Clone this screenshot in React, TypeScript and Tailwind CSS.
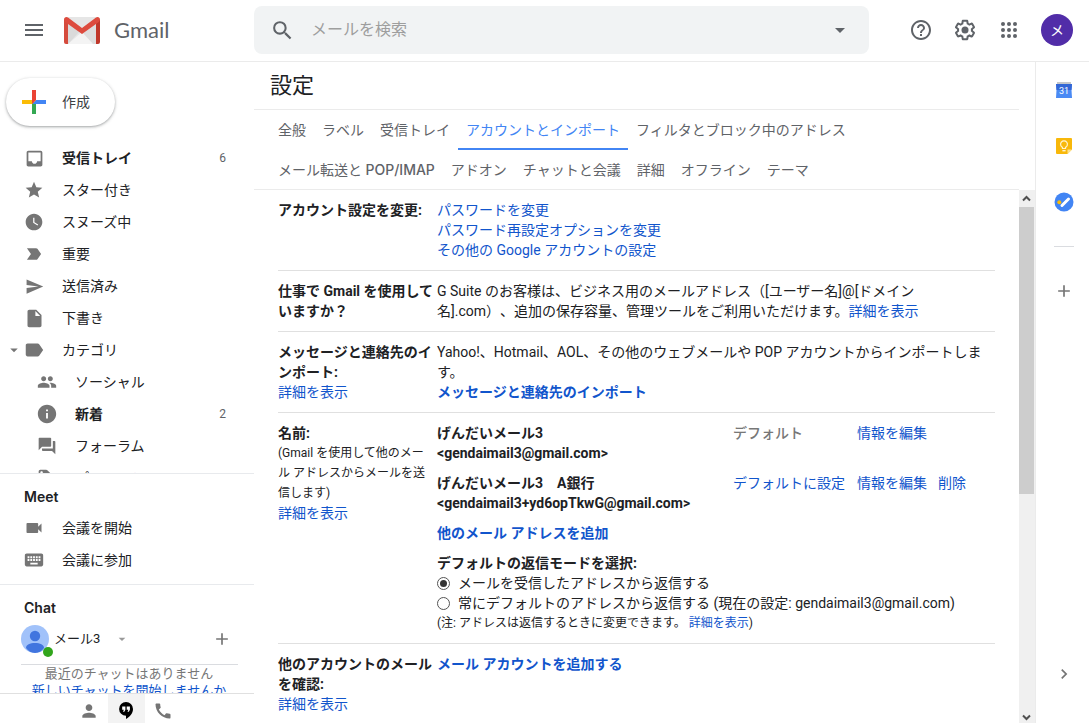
import React from 'react'
import clsx from 'clsx'
import type { IconType } from 'react-icons'
import {
    MdAdd,
    MdArrowDropDown,
    MdCall,
    MdChevronRight,
    MdForum,
    MdGroup,
    MdHelpOutline,
    MdInbox,
    MdInfo,
    MdInsertDriveFile,
    MdKeyboard,
    MdLabel,
    MdLabelImportant,
    MdLocalOffer,
    MdMenu,
    MdPerson,
    MdSearch,
    MdSend,
    MdStar,
    MdVideocam,
    MdWatchLater,
} from 'react-icons/md'

type NavItem = {
    label: string
    icon: IconType
    size?: number
    count?: number
    bold?: boolean
    expandable?: boolean
    nested?: boolean
}

const mailboxes: NavItem[] = [
    { label: '受信トレイ', icon: MdInbox, size: 21, count: 6, bold: true },
    { label: 'スター付き', icon: MdStar },
    { label: 'スヌーズ中', icon: MdWatchLater },
    { label: '重要', icon: MdLabelImportant },
    { label: '送信済み', icon: MdSend, size: 19 },
    { label: '下書き', icon: MdInsertDriveFile, size: 21 },
    { label: 'カテゴリ', icon: MdLabel, size: 22, expandable: true },
    { label: 'ソーシャル', icon: MdGroup, nested: true },
    { label: '新着', icon: MdInfo, size: 22, count: 2, bold: true, nested: true },
    { label: 'フォーラム', icon: MdForum, nested: true },
    { label: 'プロモーション', icon: MdLocalOffer, nested: true },
]

const meetLinks: NavItem[] = [
    { label: '会議を開始', icon: MdVideocam },
    { label: '会議に参加', icon: MdKeyboard, size: 22 },
]

const activeTab = 'アカウントとインポート'

const tabRows: { id: string; label?: React.ReactNode }[][] = [
    [
        { id: '全般' },
        { id: 'ラベル' },
        { id: '受信トレイ' },
        { id: activeTab },
        { id: 'フィルタとブロック中のアドレス' },
    ],
    [
        {
            id: 'forwarding',
            label: (
                <span>
                    メール転送と <span className="font-medium [font-family:Inter,sans-serif]">POP/IMAP</span>
                </span>
            ),
        },
        { id: 'アドオン' },
        { id: 'チャットと会議' },
        { id: '詳細' },
        { id: 'オフライン' },
        { id: 'テーマ' },
    ],
]

function GmailLogo() {
    return (
        <svg width="36" height="27" viewBox="0 0 36 27" aria-hidden="true">
            <path d="M2 0h32v27H2z" fill="#e6e6e6" />
            <path d="M4 27 18 15l14 12z" fill="#f4f4f4" />
            <path d="M4 5v22L16 14z" fill="#dadada" />
            <path d="M32 5v22h-3L18 15z" fill="#dedede" />
            <path d="M0 2.500V25a2 2 0 0 0 2 2h2V5z" fill="#d54b3d" />
            <path d="M36 2.500V25a2 2 0 0 1-2 2h-2V5z" fill="#c0372a" />
            <path d="M0 2.500C0 .3 2.300-.7 4 .6L18 11 32 .6c1.700-1.300 4-.3 4 1.900 0 1-.4 1.800-1.200 2.400L18 17 1.200 4.900C.4 4.300 0 3.500 0 2.500z" fill="#dd4b3e" />
        </svg>
    )
}

function GearIcon() {
    return (
        <svg width="24" height="24" viewBox="0 0 24 24" fill="currentColor" aria-hidden="true">
            <path d="M13.850 22.250h-3.700c-.74 0-1.360-.54-1.450-1.270l-.27-1.890c-.27-.14-.53-.29-.79-.46l-1.800.72c-.7.26-1.470-.03-1.810-.65L2.200 15.530c-.35-.66-.2-1.440.36-1.880l1.530-1.190c-.01-.15-.02-.3-.02-.46 0-.15.01-.31.02-.46l-1.520-1.190c-.59-.45-.74-1.260-.37-1.880l1.850-3.190c.34-.62 1.110-.9 1.790-.63l1.810.73c.26-.17.52-.32.78-.46l.27-1.910c.09-.7.71-1.250 1.440-1.250h3.700c.74 0 1.360.54 1.450 1.270l.27 1.890c.27.14.53.29.79.46l1.800-.72c.71-.26 1.480.03 1.820.65l1.840 3.180c.36.66.2 1.440-.36 1.880l-1.520 1.190c.01.15.02.3.02.46s-.01.31-.02.46l1.520 1.190c.56.45.72 1.230.37 1.860l-1.860 3.220c-.34.62-1.110.9-1.800.63l-1.800-.72c-.26.17-.52.32-.78.46l-.27 1.910c-.1.68-.72 1.220-1.460 1.220zm-3.230-2h2.760l.37-2.550.53-.22c.44-.18.88-.44 1.340-.78l.45-.34 2.380.96 1.380-2.400-2.030-1.580.07-.56c.03-.26.06-.51.06-.78s-.03-.53-.06-.78l-.07-.56 2.030-1.580-1.390-2.400-2.390.96-.45-.35c-.42-.32-.87-.58-1.330-.77l-.52-.22-.37-2.550h-2.760l-.37 2.550-.53.21c-.44.19-.88.44-1.340.79l-.45.33-2.380-.95-1.390 2.390 2.030 1.580-.07.56a7 7 0 0 0-.06.79c0 .26.02.53.06.78l.07.56-2.030 1.580 1.380 2.400 2.390-.96.45.35c.43.33.86.58 1.330.77l.53.22.38 2.550z" />
            <circle cx="12" cy="12" r="3.500" />
        </svg>
    )
}

function AppsIcon() {
    return (
        <svg width="24" height="24" viewBox="0 0 24 24" fill="currentColor" aria-hidden="true">
            {[6, 12, 18].map((cy) => [6, 12, 18].map((cx) => <circle key={`${cx}-${cy}`} cx={cx} cy={cy} r="2" />))}
        </svg>
    )
}

function ComposePlus() {
    return (
        <svg width="36" height="36" viewBox="0 0 36 36" aria-hidden="true">
            <path fill="#34a853" d="M16 16v14h4V20z" />
            <path fill="#4285f4" d="M30 16H20l-4 4h14z" />
            <path fill="#fbbc05" d="M6 16v4h10l4-4z" />
            <path fill="#ea4335" d="M20 16V6h-4v14z" />
        </svg>
    )
}

function UserAvatar() {
    return (
        <svg width="28" height="28" viewBox="0 0 28 28" aria-hidden="true">
            <clipPath id="avatar-clip">
                <circle cx="14" cy="14" r="14" />
            </clipPath>
            <g clipPath="url(#avatar-clip)">
                <path d="M0 0h28v28H0z" fill="#a1c2fa" />
                <circle cx="14" cy="11" r="5.200" fill="#4175df" />
                <path d="M5 23c0-3.500 4-5 9-5s9 1.500 9 5c-2 3-5.500 5-9 5s-7-2-9-5z" fill="#4175df" />
            </g>
        </svg>
    )
}

function HangoutsIcon() {
    return (
        <svg width="14" height="17" viewBox="0 0 14 17" aria-hidden="true">
            <path d="M7 0a6.900 6.900 0 0 0 0 13.800V17c3.400-1.700 7-5.400 7-10A7 7 0 0 0 7 0z" fill="#000" />
            <path d="M3.200 4.500h3.200v3.200L5.300 9.800H4l.9-2.100H3.200zM7.700 4.500h3.200v3.200L9.800 9.800H8.500l.9-2.100H7.700z" fill="#fff" />
        </svg>
    )
}

function CalendarIcon() {
    return (
        <svg width="16" height="16" viewBox="0 0 16 16" aria-hidden="true">
            <path d="M1 0h14v3H1z" fill="#c5c7ca" />
            <path d="M0 2h16l-.5 6 .5 8H0l.5-8z" fill="#4a8af4" />
            <path d="M0 2h16l-.5 6H.5z" fill="#3367d6" />
            <text x="8" y="12" textAnchor="middle" fontSize="9" fontFamily="Roboto" fill="#fff">31</text>
        </svg>
    )
}

function KeepIcon() {
    return (
        <svg width="16" height="16" viewBox="0 0 16 16" aria-hidden="true">
            <path d="M1 0h14a1 1 0 0 1 1 1v10.500L11.500 16H1a1 1 0 0 1-1-1V1a1 1 0 0 1 1-1z" fill="#f8b80a" />
            <path d="M16 11.500 11.500 16v-4.500z" fill="#fde293" />
            <path d="M6.500 10.500V9.400a3.400 3.400 0 1 1 3 0v1.100z" fill="none" stroke="#fff3cf" strokeWidth="1.200" />
            <path d="M6.400 12h3.200v1.400H6.400z" fill="#fff3cf" />
        </svg>
    )
}

function TasksIcon() {
    return (
        <svg width="20" height="20" viewBox="0 0 20 20" aria-hidden="true">
            <circle cx="10" cy="10" r="9.500" fill="#4285f4" />
            <path d="M8 13.500 14.500 7" stroke="#fff" strokeWidth="3" strokeLinecap="round" />
            <circle cx="5.300" cy="10.200" r="2" fill="#fbbc05" />
        </svg>
    )
}

function ScrollArrow({ down }: { down?: boolean }) {
    return (
        <svg width="9" height="7" viewBox="0 0 9 7" fill="none" stroke="#505050" strokeWidth="2" aria-hidden="true">
            <path d={down ? 'M1 1.500 4.500 5 8 1.500' : 'M1 5.500 4.500 2 8 5.500'} />
        </svg>
    )
}

function NavRow({ item }: { item: NavItem }) {
    const Icon = item.icon
    return (
        <a href="#" className={clsx('flex h-8 shrink-0 items-center pr-7 text-sm text-[#202124]', item.nested ? 'pl-9' : 'pl-2')}>
            {!item.nested && (
                <span className="w-[15px] shrink-0">
                    {item.expandable && <MdArrowDropDown size={18} className="-ml-[3px] text-[#757575]" />}
                </span>
            )}
            <span className="mr-[17px] flex w-[22px] shrink-0 items-center justify-center text-[#757575]">
                <Icon size={item.size ?? 20} />
            </span>
            <span className={clsx('flex-1 whitespace-nowrap', item.bold && 'font-bold')}>{item.label}</span>
            {item.count && <span className="text-xs text-[#5f6368]">{item.count}</span>}
        </a>
    )
}

function Sidebar() {
    return (
        <aside className="flex w-[254px] shrink-0 flex-col">
            <div className="pt-4 pb-4 pl-1.5">
                <button className="flex h-12 items-center gap-2.5 rounded-full bg-white pr-[25px] pl-2.5 text-sm text-[#3c4043] shadow-[0_1px_2px_0_rgba(60,64,67,0.302),0_1px_3px_1px_rgba(60,64,67,0.149)]">
                    <ComposePlus />
                    作成
                </button>
            </div>
            <nav className="flex min-h-0 flex-1 flex-col overflow-hidden">
                {mailboxes.map((item) => (
                    <NavRow key={item.label} item={item} />
                ))}
            </nav>

            {/* Meet */}
            <section className="shrink-0 border-t border-[#e8eaed] pt-2 pb-2">
                <h2 className="pl-6 text-sm leading-[30px] font-semibold text-[#202124] [font-family:Inter,sans-serif]">Meet</h2>
                {meetLinks.map((item) => (
                    <NavRow key={item.label} item={item} />
                ))}
            </section>

            {/* Chat */}
            <section className="h-[109px] shrink-0 overflow-hidden border-t border-[#e8eaed] pt-2">
                <h2 className="pl-6 text-sm leading-[30px] font-semibold text-[#202124] [font-family:Inter,sans-serif]">Chat</h2>
                <div className="mr-4 ml-[21px] flex h-[42px] items-center border-b border-[#dadce0] pb-2.5">
                    <span className="relative">
                        <UserAvatar />
                        <span className="absolute -right-1 -bottom-1 size-2.5 rounded-full bg-[#32a51c]"></span>
                    </span>
                    <button className="ml-[5px] flex flex-1 items-center gap-3.5 text-[13px] text-[#202124]">
                        メール3
                        <MdArrowDropDown size={16} className="text-[#999]" />
                    </button>
                    <button aria-label="新しいチャット" className="mr-1.5 text-[#757575]">
                        <MdAdd size={20} />
                    </button>
                </div>
                <div className="pl-1 text-center text-[13px] leading-[17px] text-[#777]">
                    <p>最近のチャットはありません</p>
                    <a href="#" className="text-[#1155cc]">新しいチャットを開始しませんか</a>
                </div>
            </section>

            <div className="flex h-[30px] shrink-0 justify-center border-t border-[#e0e0e0] pr-0.5 text-[#757575]">
                <button aria-label="連絡先" className="flex w-[37px] items-center justify-center pt-1">
                    <MdPerson size={20} />
                </button>
                <button aria-label="ハングアウト" className="flex w-[37px] items-center justify-center bg-[#f3f3f3] pt-1">
                    <HangoutsIcon />
                </button>
                <button aria-label="電話" className="flex w-[37px] items-center justify-center pt-1">
                    <MdCall size={20} />
                </button>
            </div>
        </aside>
    )
}

function Header() {
    return (
        <header className="flex h-[62px] shrink-0 items-center border-b border-[#ebebeb] pr-4 pb-px text-[#5f6368]">
            <div className="flex w-[254px] shrink-0 items-center pl-[22px]">
                <button aria-label="メインメニュー">
                    <MdMenu size={24} />
                </button>
                <a href="#" className="ml-[18px] flex items-center gap-3.5 text-[22px] leading-7 [font-family:Lato,sans-serif]">
                    <GmailLogo />
                    Gmail
                </a>
            </div>
            <form className="flex h-12 flex-1 items-center rounded-lg bg-[#f1f3f4] pr-[17px] pl-4">
                <button type="button" aria-label="検索">
                    <MdSearch size={25} />
                </button>
                <input
                    aria-label="メールを検索"
                    placeholder="メールを検索"
                    className="ml-4 min-w-0 flex-1 bg-transparent text-base outline-none placeholder:text-[#9e9e9e]"
                />
                <button type="button" aria-label="検索オプションを表示">
                    <MdArrowDropDown size={24} />
                </button>
            </form>
            <div className="ml-8 flex items-center gap-1">
                <button aria-label="サポート" className="flex size-10 items-center justify-center">
                    <MdHelpOutline size={24} />
                </button>
                <button aria-label="設定" className="flex size-10 items-center justify-center">
                    <GearIcon />
                </button>
                <button aria-label="Google アプリ" className="flex size-10 items-center justify-center">
                    <AppsIcon />
                </button>
                <button className="ml-2 size-8 rounded-full bg-[#512da8] text-sm text-white">メ</button>
            </div>
        </header>
    )
}

function TextLink({ children, className }: { children: React.ReactNode; className?: string }) {
    return (
        <a href="#" className={clsx('text-[#1155cc]', className)}>
            {children}
        </a>
    )
}

function ReplyOption({ children, checked }: { children: React.ReactNode; checked?: boolean }) {
    return (
        <label className="flex items-center gap-2">
            <input
                type="radio"
                name="reply"
                defaultChecked={checked}
                className="grid size-[13px] appearance-none place-items-center rounded-full border border-[#555] before:size-[7px] before:rounded-full checked:before:bg-[#333]"
            />
            {children}
        </label>
    )
}

function SettingRow({ title, note, children }: { title: React.ReactNode; note?: React.ReactNode; children: React.ReactNode }) {
    return (
        <section className="flex border-b border-[#e0e0e0] py-2.5">
            <div className="w-[159px] shrink-0">
                <h2 className="font-bold">{title}</h2>
                {note}
            </div>
            <div className="min-w-0 flex-1">{children}</div>
        </section>
    )
}

function Settings() {
    return (
        <main className="flex min-w-0 flex-1 flex-col">
            <div className="mr-4">
                <h1 className="border-b border-[#ebebeb] pt-2 pb-2 pl-4 text-[22px] leading-[31px] text-[#202124]">設定</h1>
                <nav className="border-b border-[#ebebeb] pl-4 text-sm text-[#5f6368]">
                    {tabRows.map((row, i) => (
                        <div key={i} className={clsx('flex', i === 0 ? 'h-10' : 'h-[39px]')}>
                            {row.map((tab) => (
                                <a
                                    key={tab.id}
                                    href="#"
                                    className={clsx(
                                        'flex items-center border-y-2 border-t-transparent px-2 whitespace-nowrap',
                                        tab.id === activeTab ? 'border-b-[#4285f4] text-[#4285f4]' : 'border-b-transparent'
                                    )}
                                >
                                    {tab.label ?? tab.id}
                                </a>
                            ))}
                        </div>
                    ))}
                </nav>
            </div>

            <div className="flex min-h-0 flex-1">
                <div className="min-w-0 flex-1 overflow-hidden pr-6 pl-6 text-sm leading-5 text-[#202124] [text-spacing-trim:space-all]">
                    <SettingRow title="アカウント設定を変更:">
                        <TextLink className="block">パスワードを変更</TextLink>
                        <TextLink className="block">パスワード再設定オプションを変更</TextLink>
                        <TextLink className="block">その他の Google アカウントの設定</TextLink>
                    </SettingRow>

                    <SettingRow title={<span className="whitespace-nowrap">仕事で Gmail を使用して<br />いますか？</span>}>
                        G Suite のお客様は、ビジネス用のメールアドレス（[ユーザー名]@[ドメイン<br />
                        名].com）、追加の保存容量、管理ツールをご利用いただけます。
                        <TextLink>詳細を表示</TextLink>
                    </SettingRow>

                    <SettingRow title="メッセージと連絡先のインポート:" note={<TextLink>詳細を表示</TextLink>}>
                        <p>Yahoo!、Hotmail、AOL、その他のウェブメールや POP アカウントからインポートしま<br />す。</p>
                        <TextLink className="font-bold">メッセージと連絡先のインポート</TextLink>
                    </SettingRow>

                    <SettingRow
                        title="名前:"
                        note={
                            <>
                                <p className="pr-1 text-xs leading-5">(Gmail を使用して他のメール アドレスからメールを送信します)</p>
                                <TextLink>詳細を表示</TextLink>
                            </>
                        }
                    >
                        <table className="w-full table-fixed text-left align-top">
                            <colgroup>
                                <col className="w-[296px]" />
                                <col className="w-[124px]" />
                                <col className="w-[81px]" />
                                <col />
                            </colgroup>
                            <tbody>
                                <tr className="align-top">
                                    <th scope="row" className="pb-2.5 font-bold">げんだいメール3<br />&lt;gendaimail3@gmail.com&gt;</th>
                                    <td className="font-medium text-[#777]">デフォルト</td>
                                    <td><TextLink>情報を編集</TextLink></td>
                                    <td></td>
                                </tr>
                                <tr className="align-top">
                                    <th scope="row" className="pb-2.5 font-bold">げんだいメール3　A銀行<br />&lt;gendaimail3+yd6opTkwG@gmail.com&gt;</th>
                                    <td><TextLink>デフォルトに設定</TextLink></td>
                                    <td><TextLink>情報を編集</TextLink></td>
                                    <td><TextLink>削除</TextLink></td>
                                </tr>
                            </tbody>
                        </table>
                        <TextLink className="block pb-2.5 font-bold">他のメール アドレスを追加</TextLink>
                        <fieldset>
                            <legend className="font-bold">デフォルトの返信モードを選択:</legend>
                            <ReplyOption checked>メールを受信したアドレスから返信する</ReplyOption>
                            <ReplyOption>常にデフォルトのアドレスから返信する (現在の設定: gendaimail3@gmail.com)</ReplyOption>
                        </fieldset>
                        <p className="text-xs leading-5">
                            (注: アドレスは返信するときに変更できます。 <TextLink>詳細を表示</TextLink>)
                        </p>
                    </SettingRow>

                    <SettingRow title="他のアカウントのメールを確認:" note={<TextLink>詳細を表示</TextLink>}>
                        <TextLink className="font-bold">メール アカウントを追加する</TextLink>
                    </SettingRow>
                </div>

                {/* Scrollbar */}
                <div className="flex w-4 shrink-0 flex-col bg-[#f0f0f0]">
                    <button aria-label="上へ" className="flex h-[17px] shrink-0 items-center justify-center pr-px">
                        <ScrollArrow />
                    </button>
                    <div className="flex-1">
                        <div className="mr-px h-[57%] bg-[#cdcdcd]"></div>
                    </div>
                    <button aria-label="下へ" className="flex h-3 shrink-0 items-center justify-center pr-px">
                        <ScrollArrow down />
                    </button>
                </div>
            </div>
        </main>
    )
}

function SidePanel() {
    return (
        <aside className="flex w-[54px] shrink-0 flex-col items-center border-l border-[#ebebeb] pl-0.5 text-[#757575]">
            <button aria-label="カレンダー" className="flex h-14 w-12 items-center justify-center">
                <CalendarIcon />
            </button>
            <button aria-label="Keep" className="flex h-14 w-12 items-center justify-center">
                <KeepIcon />
            </button>
            <button aria-label="ToDo リスト" className="flex h-14 w-12 items-center justify-center">
                <TasksIcon />
            </button>
            <div className="my-4 h-px w-5 bg-[#dadce0]"></div>
            <button aria-label="アドオンを取得" className="flex h-14 w-12 items-center justify-center">
                <MdAdd size={20} />
            </button>
            <button aria-label="サイドパネルを非表示" className="mt-auto mb-[21px] flex h-14 w-12 items-center justify-center">
                <MdChevronRight size={20} />
            </button>
        </aside>
    )
}

export default function App() {
    return (
        <div lang="ja" className="flex h-screen flex-col overflow-hidden bg-white [font-family:Roboto,'Noto_Sans_CJK_JP',sans-serif]">
            <Header />
            <div className="flex min-h-0 flex-1">
                <Sidebar />
                <Settings />
                <SidePanel />
            </div>
        </div>
    )
}
